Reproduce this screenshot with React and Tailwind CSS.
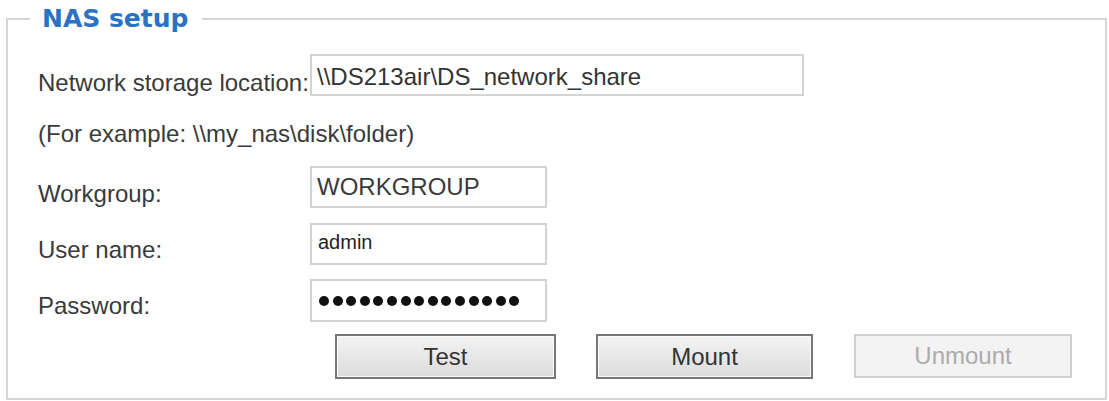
export default function App() {
  const labelFont = { fontFamily: '"Liberation Sans", Arial, sans-serif' };

  return (
    <div className="w-full h-[401px] bg-white pt-[4px]" style={labelFont}>
      <fieldset className="ml-[6px] mr-[2px] h-[396px] border-2 border-[#d6d6d6]">
        <legend
          className="ml-[22px] pl-[12px] pr-[14px] leading-[30px] text-[25px] font-bold text-[#2a72c4]"
          style={{ fontFamily: '"DejaVu Sans", Verdana, sans-serif' }}
        >
          NAS setup
        </legend>

        <div className="pl-[30px] flex flex-col text-[24px] text-[#3a3a3a]">
          {/* Network storage location */}
          <div className="flex items-end mt-[20px]">
            <div className="w-[272px] leading-[28px] mb-[-1px]">Network storage location:</div>
            <input
              readOnly
              value="\\DS213air\DS_network_share"
              className="w-[494px] h-[42px] border-2 border-[#d3d3d3] px-[5px] pt-[4px] text-[24px] text-[#333] bg-white outline-none"
              style={labelFont}
            />
          </div>

          <div className="mt-[24px] leading-[28px]">(For example: \\my_nas\disk\folder)</div>

          {/* Workgroup */}
          <div className="flex items-end mt-[18px]">
            <div className="w-[272px] leading-[28px]">Workgroup:</div>
            <input
              readOnly
              value="WORKGROUP"
              className="w-[237px] h-[42px] border-2 border-[#d3d3d3] px-[5px] text-[24px] text-[#3a3a3a] bg-white outline-none"
              style={labelFont}
            />
          </div>

          {/* User name */}
          <div className="flex items-end mt-[15px]">
            <div className="w-[272px] leading-[28px] mb-[1px]">User name:</div>
            <input
              readOnly
              value="admin"
              className="w-[237px] h-[42px] border-2 border-[#d3d3d3] px-[6px] pb-[4px] text-[20px] text-[#222] bg-white outline-none"
              style={labelFont}
            />
          </div>

          {/* Password */}
          <div className="flex items-end mt-[14px]">
            <div className="w-[272px] leading-[28px] mb-[2px]">Password:</div>
            <div className="w-[237px] h-[43px] border-2 border-[#d3d3d3] pl-[7px] flex items-center gap-[3.6px] bg-white">
              {Array.from({ length: 15 }).map((_, i) => (
                <span key={i} className="block w-[10px] h-[10px] rounded-full bg-[#111]" />
              ))}
            </div>
          </div>

          {/* Buttons */}
          <div className="flex mt-[12px] ml-[297px]">
            <button className="w-[221px] h-[45px] border-2 border-[#767676] bg-gradient-to-b from-[#f3f3f3] to-[#dcdcdc] shadow-[inset_0_0_0_1px_#fafafa] text-[24px] text-[#333]">
              Test
            </button>
            <button className="ml-[40px] w-[217px] h-[45px] border-2 border-[#767676] bg-gradient-to-b from-[#f3f3f3] to-[#dcdcdc] shadow-[inset_0_0_0_1px_#fafafa] text-[24px] text-[#333]">
              Mount
            </button>
            <button className="ml-[41px] w-[218px] h-[44px] border-2 border-[#cfcfcf] bg-[#f3f3f3] text-[24px] text-[#ababab]">
              Unmount
            </button>
          </div>
        </div>
      </fieldset>
    </div>
  );
}
